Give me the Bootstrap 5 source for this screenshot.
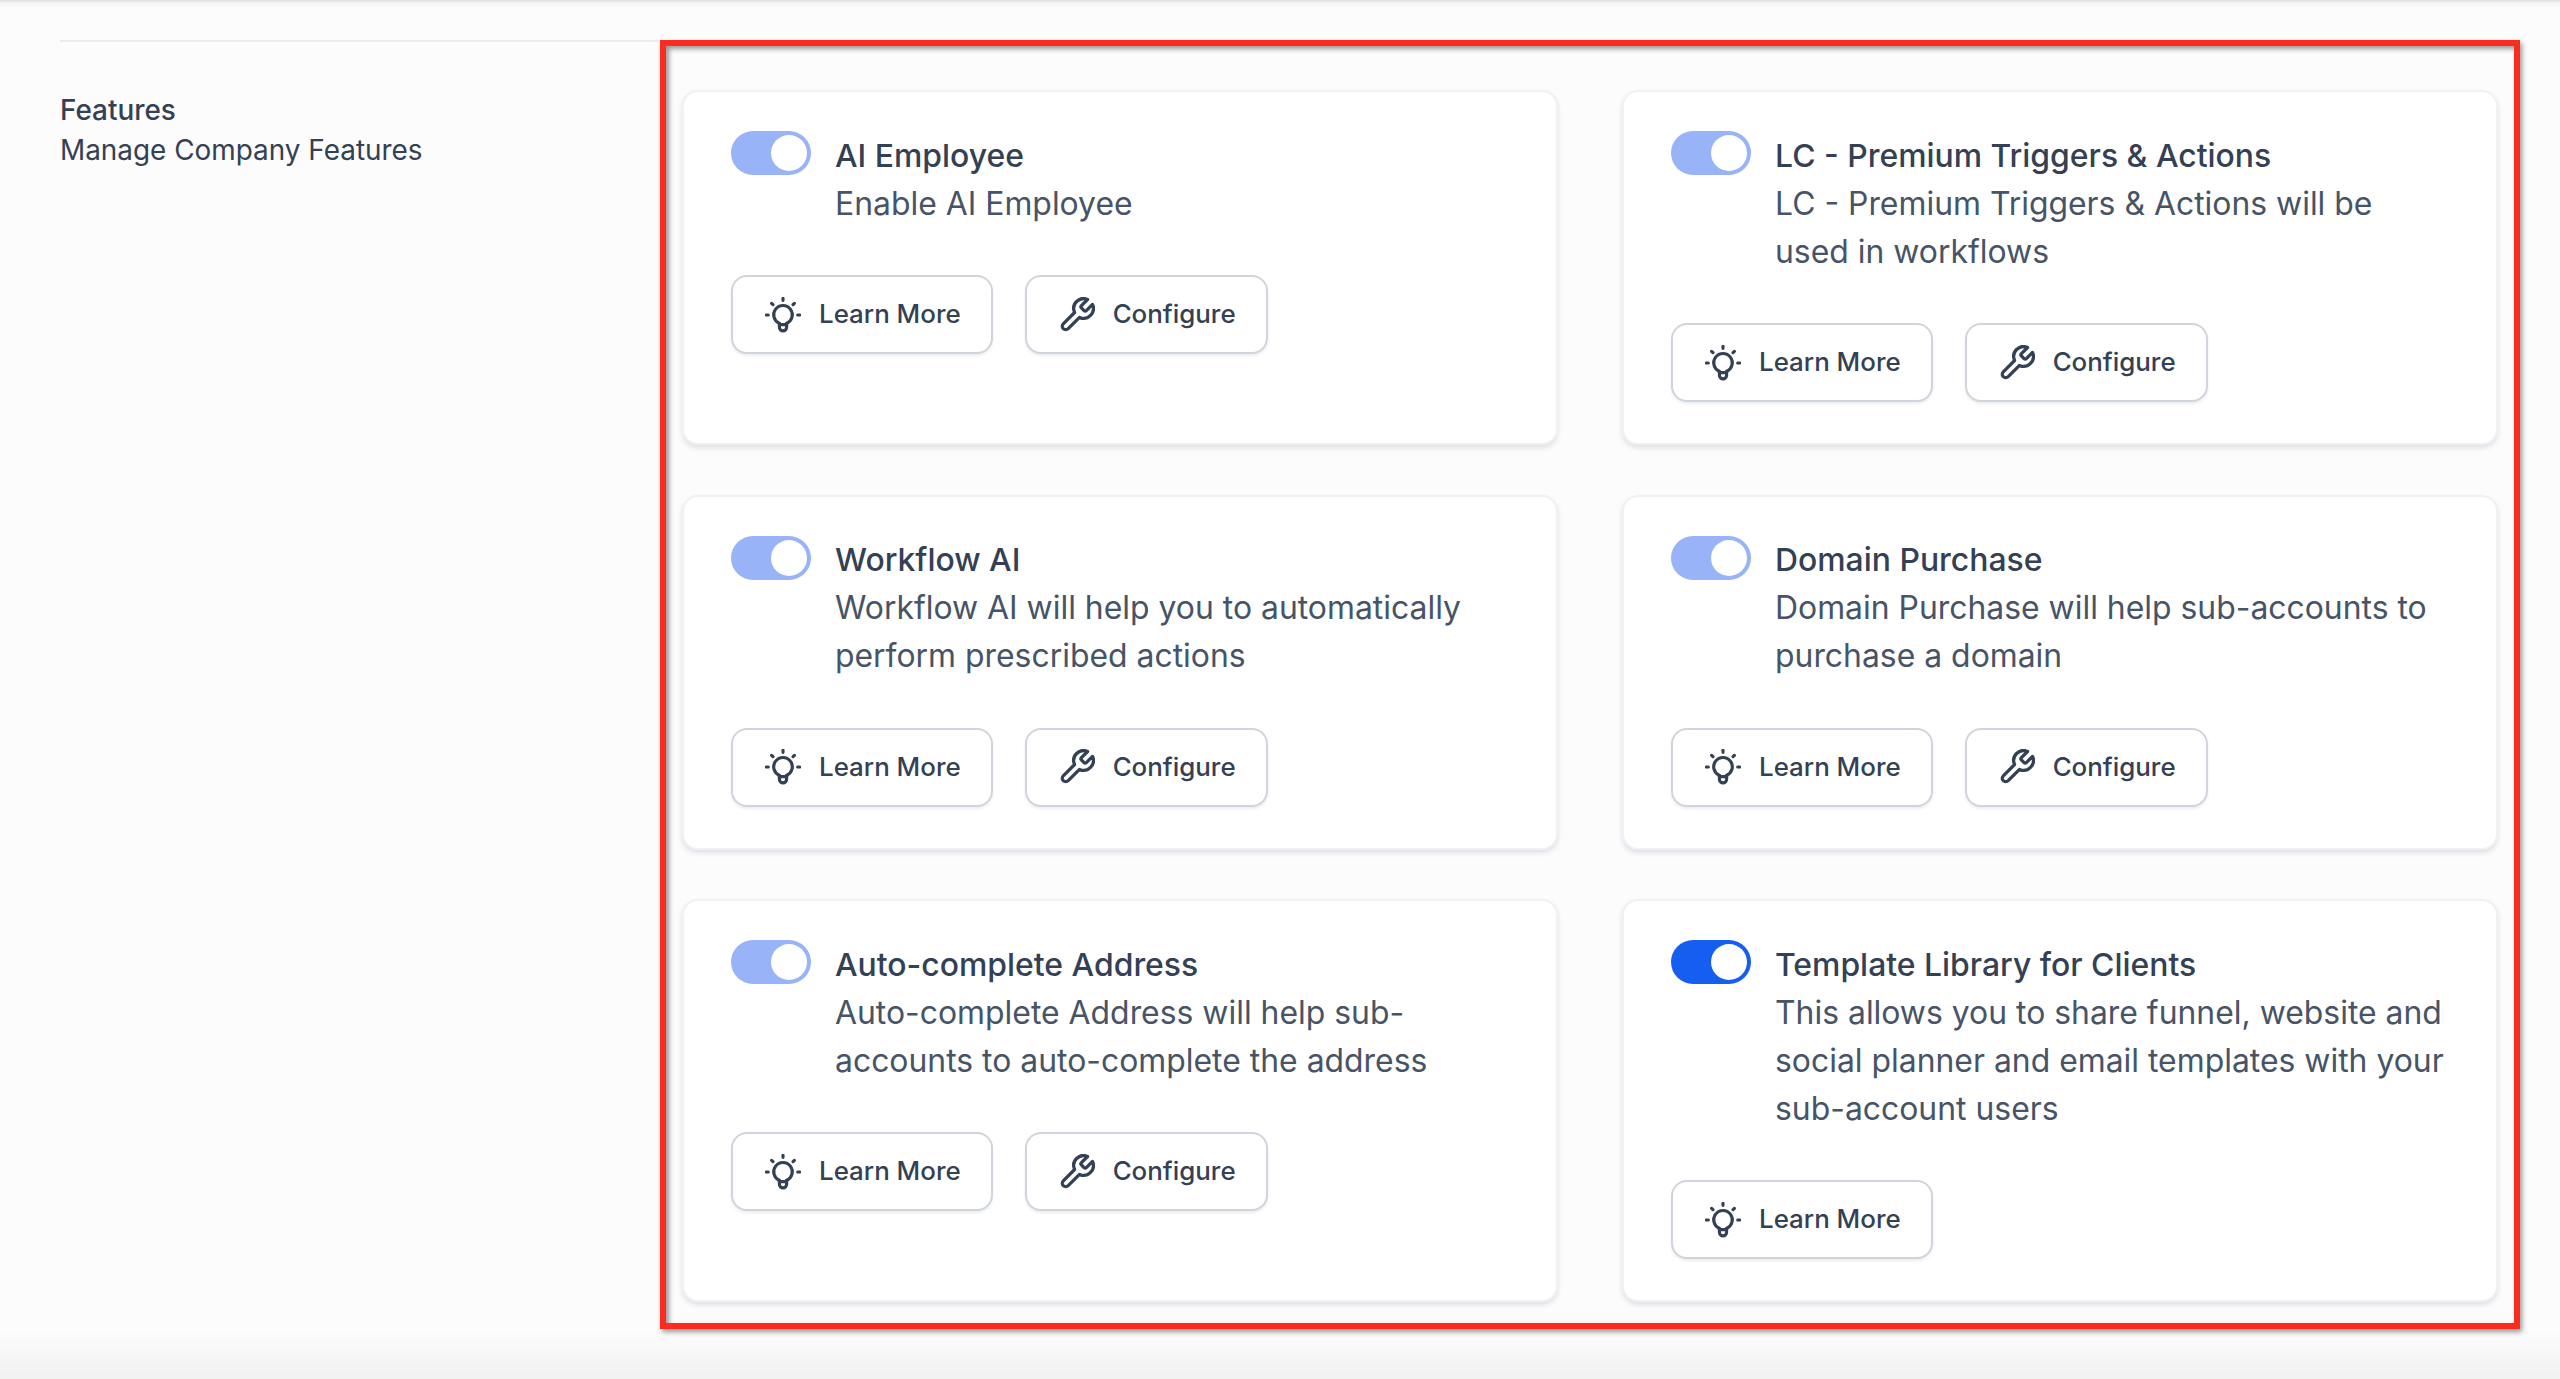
<!DOCTYPE html>
<html lang="en">
<head>
<meta charset="utf-8">
<title>Features</title>
<link rel="stylesheet" href="https://cdn.jsdelivr.net/npm/bootstrap@5.3.0/dist/css/bootstrap.min.css">
<style>
html,body{height:100%}
body{background:#fcfcfd;font-family:Inter,"Liberation Sans",sans-serif;overflow:hidden;color:#344054}
.page-shell{height:1379px;background:linear-gradient(#dedede 0,#f4f4f4 3px,#fcfcfd 8px,#fcfcfd 1330px,#f1f1f1 1379px)}
.layout-row{padding:40px 40px 0 60px}
.side-col{width:600px;border-top:2px solid #eaecf0;padding-top:48px;flex:none}
.side-title,.side-sub{font-size:27.9px;line-height:40px;color:#344054}
.side-title{font-weight:500}
.annot-box{width:1860px;height:1289px;border:6px solid #fb2c1f;box-shadow:2px 3px 5px rgba(0,0,0,.4),inset 3px 3px 5px rgba(0,0,0,.4);padding:44px 16px 0 16px}
.feature-grid{grid-template-columns:876px 876px;grid-template-rows:355px 355px 403px;column-gap:64px;row-gap:49.5px}
.feature-card{border:2px solid #eff1f5;border-radius:16px;background:#fff;box-shadow:0 3px 5px rgba(16,24,40,.12);padding:39px 46px 0 47px}
.fc-toggle.form-check-input{width:80px;height:44px;margin:0;border:0;flex:none;background-size:contain;background-position:right center;background-image:url("data:image/svg+xml,%3csvg xmlns='http://www.w3.org/2000/svg' viewBox='-4 -4 8 8'%3e%3ccircle r='3.27' fill='%23fff'/%3e%3c/svg%3e");box-shadow:none;border-radius:22px;opacity:1}
.fc-toggle.form-check-input:checked{background-color:#98b3f8}
.fc-toggle.form-check-input.is-live:checked{background-color:#155eef}
.switch-holder{padding:0;margin:0;min-height:0}
.feature-text{margin-left:24px;padding-top:.5px}
.feature-title{font-size:31.9px;line-height:48px;font-weight:500;color:#344054}
.feature-desc{font-size:31.9px;line-height:48px;color:#475467}
.feature-actions{margin-top:47.5px;gap:32px}
.act-btn{height:79px;padding:0 30px 0 32px;gap:18px;border:2px solid #d0d5dd;border-radius:16px;background:#fff;color:#344054;font-size:25.9px;font-weight:500;box-shadow:0 2px 3px rgba(16,24,40,.08)}
.act-btn svg{width:36px;height:36px;flex:none}
</style>
</head>
<body>
<svg width="0" height="0" class="d-block">
<symbol id="ic-bulb" viewBox="0 0 24 24"><g fill="none" stroke="#344054" stroke-width="2.1" stroke-linecap="round" stroke-linejoin="round"><path d="M9.6 17.6a6.2 6.2 0 1 1 4.8 0"/><path d="M9.6 17.6v2.6a2.4 2.4 0 0 0 4.8 0v-2.6"/><path d="M9.6 18.4h4.8"/><path d="M12 .9v1.3M4.4 4.2l.9.9M19.6 4.2l-.9.9M.9 12h1.3M21.8 12h1.3"/></g></symbol>
<symbol id="ic-tool" viewBox="1 1 22 22"><path fill="none" stroke="#344054" stroke-width="2" stroke-linecap="round" stroke-linejoin="round" d="M14.7 6.3a1 1 0 0 0 0 1.4l1.6 1.6a1 1 0 0 0 1.4 0l3.77-3.77a6 6 0 0 1-7.94 7.94l-6.91 6.91a2.12 2.12 0 0 1-3-3l6.91-6.91a6 6 0 0 1 7.94-7.94l-3.76 3.76z"/></symbol>
</svg>
<div class="page-shell">
<div class="layout-row d-flex">
  <div class="side-col">
    <div class="side-title">Features</div>
    <div class="side-sub">Manage Company Features</div>
  </div>
  <div class="annot-box">
    <div class="feature-grid d-grid">

      <div class="card feature-card">
        <div class="d-flex">
          <div class="form-check form-switch switch-holder"><input class="form-check-input fc-toggle" type="checkbox" role="switch" checked aria-label="AI Employee"></div>
          <div class="feature-text"><div class="feature-title">AI Employee</div><div class="feature-desc">Enable AI Employee</div></div>
        </div>
        <div class="d-flex feature-actions">
          <button type="button" class="btn act-btn d-inline-flex align-items-center"><svg><use href="#ic-bulb"/></svg>Learn More</button>
          <button type="button" class="btn act-btn d-inline-flex align-items-center"><svg><use href="#ic-tool"/></svg>Configure</button>
        </div>
      </div>

      <div class="card feature-card">
        <div class="d-flex">
          <div class="form-check form-switch switch-holder"><input class="form-check-input fc-toggle" type="checkbox" role="switch" checked aria-label="LC - Premium Triggers &amp; Actions"></div>
          <div class="feature-text"><div class="feature-title">LC - Premium Triggers &amp; Actions</div><div class="feature-desc">LC - Premium Triggers &amp; Actions will be<br>used in workflows</div></div>
        </div>
        <div class="d-flex feature-actions">
          <button type="button" class="btn act-btn d-inline-flex align-items-center"><svg><use href="#ic-bulb"/></svg>Learn More</button>
          <button type="button" class="btn act-btn d-inline-flex align-items-center"><svg><use href="#ic-tool"/></svg>Configure</button>
        </div>
      </div>

      <div class="card feature-card">
        <div class="d-flex">
          <div class="form-check form-switch switch-holder"><input class="form-check-input fc-toggle" type="checkbox" role="switch" checked aria-label="Workflow AI"></div>
          <div class="feature-text"><div class="feature-title">Workflow AI</div><div class="feature-desc">Workflow AI will help you to automatically<br>perform prescribed actions</div></div>
        </div>
        <div class="d-flex feature-actions">
          <button type="button" class="btn act-btn d-inline-flex align-items-center"><svg><use href="#ic-bulb"/></svg>Learn More</button>
          <button type="button" class="btn act-btn d-inline-flex align-items-center"><svg><use href="#ic-tool"/></svg>Configure</button>
        </div>
      </div>

      <div class="card feature-card">
        <div class="d-flex">
          <div class="form-check form-switch switch-holder"><input class="form-check-input fc-toggle" type="checkbox" role="switch" checked aria-label="Domain Purchase"></div>
          <div class="feature-text"><div class="feature-title">Domain Purchase</div><div class="feature-desc">Domain Purchase will help sub-accounts to<br>purchase a domain</div></div>
        </div>
        <div class="d-flex feature-actions">
          <button type="button" class="btn act-btn d-inline-flex align-items-center"><svg><use href="#ic-bulb"/></svg>Learn More</button>
          <button type="button" class="btn act-btn d-inline-flex align-items-center"><svg><use href="#ic-tool"/></svg>Configure</button>
        </div>
      </div>

      <div class="card feature-card">
        <div class="d-flex">
          <div class="form-check form-switch switch-holder"><input class="form-check-input fc-toggle" type="checkbox" role="switch" checked aria-label="Auto-complete Address"></div>
          <div class="feature-text"><div class="feature-title">Auto-complete Address</div><div class="feature-desc">Auto-complete Address will help sub-<br>accounts to auto-complete the address</div></div>
        </div>
        <div class="d-flex feature-actions">
          <button type="button" class="btn act-btn d-inline-flex align-items-center"><svg><use href="#ic-bulb"/></svg>Learn More</button>
          <button type="button" class="btn act-btn d-inline-flex align-items-center"><svg><use href="#ic-tool"/></svg>Configure</button>
        </div>
      </div>

      <div class="card feature-card">
        <div class="d-flex">
          <div class="form-check form-switch switch-holder"><input class="form-check-input fc-toggle is-live" type="checkbox" role="switch" checked aria-label="Template Library for Clients"></div>
          <div class="feature-text"><div class="feature-title">Template Library for Clients</div><div class="feature-desc">This allows you to share funnel, website and<br>social planner and email templates with your<br>sub-account users</div></div>
        </div>
        <div class="d-flex feature-actions">
          <button type="button" class="btn act-btn d-inline-flex align-items-center"><svg><use href="#ic-bulb"/></svg>Learn More</button>
        </div>
      </div>

    </div>
  </div>
</div>
</div>
<script src="https://cdn.jsdelivr.net/npm/bootstrap@5.3.0/dist/js/bootstrap.bundle.min.js"></script>
</body>
</html>
